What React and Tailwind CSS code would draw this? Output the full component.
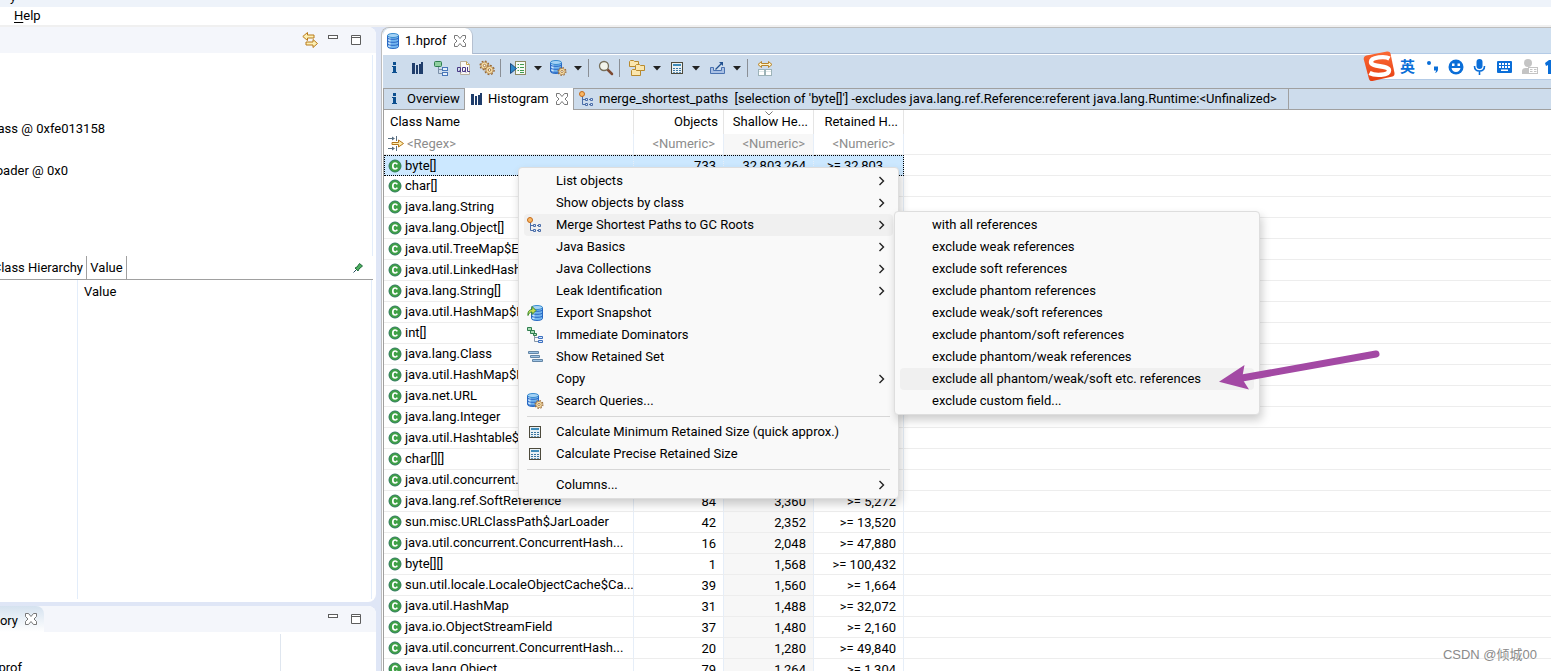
import React from "react";

const FONT = "font-['Roboto','Noto_Sans_CJK_SC',sans-serif]";

/* ---------- icons ---------- */

function Svg({ children, w = 16, h = 16, className = "" }) {
  return (
    <svg width={w} height={h} viewBox={`0 0 ${w} ${h}`} fill="none" className={`block shrink-0 ${className}`} aria-hidden="true">
      {children}
    </svg>
  );
}

const InfoIcon = () => (
  <Svg>
    <path d="M6 2h3v3H6zM5 6h4v6h1v1H5v-1h1V7H5z" fill="#0d4f8f" />
  </Svg>
);

const BarsIcon = () => (
  <Svg>
    <path d="M2 3h3v11H2zM6 5h2v9H6zM9 4h2v10H9zM11 2h2v12h-2z" fill="#1f3d6b" />
  </Svg>
);

const TreeIcon = () => (
  <Svg>
    <rect x="1.500" y="1.500" width="7" height="5" rx="1" fill="#8fcf9f" stroke="#2f7d4f" />
    <path d="M5.500 7v6.500H9M5.500 9.500H9" stroke="#7a8fa8" />
    <rect x="9.500" y="7.500" width="5" height="3" fill="#e6f0fb" stroke="#4876b8" />
    <rect x="9.500" y="12.500" width="5" height="3" fill="#e6f0fb" stroke="#4876b8" />
  </Svg>
);

const OqlIcon = () => (
  <Svg>
    <path d="M4.500 1.500h6l3 3v10h-9z" fill="#f8f7f4" stroke="#b8b0a0" />
    <path d="M10.500 1.500v3h3" stroke="#c9a24a" />
    <g stroke="#4b3a86">
      <path d="M1.500 7.500h3v4h-3zM3.500 10.500l1.500 2M6.500 7.500h3v4h-3zM8.500 10.500l1.500 2M11.500 7v4.500h2.500" />
    </g>
  </Svg>
);

const Gear = ({ cx, cy, s = 1 }) => (
  <g transform={`translate(${cx} ${cy}) scale(${s})`}>
    <circle r="4.600" stroke="#9a6a34" strokeWidth="1.400" strokeDasharray="1.800 1.810" />
    <circle r="3.700" fill="#f6dfa8" stroke="#a87840" strokeWidth=".8" />
    <circle r="1.300" fill="#fff" stroke="#9a6a34" strokeWidth=".9" />
  </g>
);

const GearsIcon = () => (
  <Svg>
    <Gear cx={5.500} cy={5.500} s={0.950} />
    <Gear cx={10.500} cy={10} s={1} />
  </Svg>
);

const QueryIcon = () => (
  <Svg w={17}>
    <rect x="5.500" y="1.500" width="10" height="13" fill="#f7fbf5" stroke="#8d8a63" />
    <path d="M10 4.500h4M10 7.500h4M10 10.500h4M10 12.500h4" stroke="#3f9a4f" />
    <path d="M7.500 4.500H9M7.500 7.500H9M7.500 10.500H9" stroke="#3f9a4f" />
    <path d="M.5 3.500l6 5-6 5z" fill="#2e88c8" stroke="#1c4a80" />
  </Svg>
);

const Cyl = ({ x = 0, y = 0, w = 11, h = 14 }) => (
  <g transform={`translate(${x} ${y})`}>
    <path d={`M.5 2.500v${h - 5}c0 1.300 ${w / 4} 2 ${w / 2 - 0.5} 2s${w / 2 - 0.5} -.7 ${w / 2 - 0.5} -2V2.500z`} fill="#74b6ee" stroke="#2b6cc4" />
    <path d={`M2.500 3v${h - 5}`} stroke="#cfe8fc" strokeWidth="2" />
    {[5.500, 8.500, 11.500].filter((n) => n < h - 1).map((n) => (
      <path key={n} d={`M.5 ${n - 1}c0 1.200 2 1.800 ${w / 2 - 0.5} 1.800s${w / 2 - 0.5} -.6 ${w / 2 - 0.5} -1.800`} stroke="#1f5cc0" strokeWidth=".9" />
    ))}
    <ellipse cx={w / 2} cy="2.500" rx={w / 2 - 0.5} ry="2" fill="#a5d3f5" stroke="#3a8cd0" />
  </g>
);

const DbIcon = () => (
  <Svg>
    <Cyl x={2} y={0} w={12} h={16} />
  </Svg>
);

const DbGearIcon = () => (
  <Svg w={17}>
    <Cyl x={0} y={0} w={12} h={14} />
    <Gear cx={12} cy={11.500} s={0.850} />
  </Svg>
);

const SearchIcon = () => (
  <Svg>
    <path d="M9.500 9.500l4.500 4.500" stroke="#7d4a33" strokeWidth="2.500" strokeLinecap="round" />
    <circle cx="6" cy="6" r="4.500" fill="#f2f4ec" stroke="#77705c" strokeWidth="1.300" />
  </Svg>
);

const FoldersIcon = () => (
  <Svg w={17}>
    {[[0.500, 0.500], [6.500, 4.500], [2.500, 9.500]].map(([x, y]) => (
      <path key={y} d={`M${x} ${y + 1}l1-1h3l1 1h4v5h-9z`} fill="#fae6ae" stroke="#b88a2e" />
    ))}
  </Svg>
);

const CalcIcon = () => (
  <Svg>
    <rect x="2.500" y="2.500" width="11" height="11" fill="#e9f1f5" stroke="#4d4a3c" />
    <path d="M4 4h8v2H4z" fill="#3f8cba" />
    <path d="M4 8h2v1H4zM7 8h2v1H7zM10 8h2v1h-2zM4 10h2v1H4zM7 10h2v1H7zM10 10h2v1h-2zM4 12h2v.8H4zM7 12h2v.8H7zM10 12h2v.8h-2z" fill="#3a75a0" />
  </Svg>
);

const ExportIcon = () => (
  <Svg w={17}>
    <path d="M1.500 7.500h3v3h8v-3h3v6h-14z" fill="#a9c0e4" stroke="#4a72b0" />
    <path d="M6.500 9.500l6-6" stroke="#1f4f8f" strokeWidth="1.200" />
    <path d="M10 2h4v4z" fill="#1f4f8f" />
  </Svg>
);

const CompareIcon = () => (
  <Svg>
    <path d="M1 4.500l3.500-3v2h7v-2l3.500 3-3.500 3v-2h-7v2z" fill="#fdf3c8" stroke="#b8842a" />
    <rect x="1.500" y="9.500" width="6" height="6" fill="#fff" stroke="#9db3b8" />
    <rect x="8.500" y="9.500" width="6" height="6" fill="#fff" stroke="#9db3b8" />
    <path d="M2 11.500h5M9 11.500h5" stroke="#dfe9ea" />
  </Svg>
);

const PathsIcon = () => (
  <Svg>
    <path d="M3.500 5v8.500H7M3.500 8.500H7M10 8.500h2M10 13.500h2" stroke="#4a6da8" />
    <circle cx="3" cy="3" r="2.500" fill="#f9b866" stroke="#c46a1a" />
    <path d="M6.500 7.500h2v2h-2zM11.500 7.500h2v2h-2zM6.500 12.500h2v2h-2zM11.500 12.500h2v2h-2z" fill="#dbe8f8" stroke="#4a6da8" />
  </Svg>
);

const ExportDbIcon = () => (
  <Svg>
    <Cyl x={4} y={0} w={12} h={16} />
    <path d="M1 10.500C.5 6.500 2.500 4.500 5 4.500v-3L9 5.500 5 9.500v-2.500c-2 0-3 1-4 3.500z" fill="#c9dc4e" stroke="#3c8a2e" />
  </Svg>
);

const DominatorsIcon = () => (
  <Svg>
    <path d="M.5.5h4v3h-4zM3.500 3.500h4v3h-4zM6.500 6.500h3v2h-3z" fill="#a9dcb4" stroke="#2f7d4f" />
    <path d="M7.500 9v5.500H11M7.500 10.500H11" stroke="#8797a8" />
    <path d="M11.500 9.500h4v2h-4zM11.500 13.500h4v2h-4z" fill="#dbe8f8" stroke="#3b6fc0" />
  </Svg>
);

const RetainedIcon = () => (
  <Svg>
    <path d="M1.500 2.500h10v2h-10zM3.500 6.500h9v2h-9zM5.500 10.500h10v2h-10z" fill="#9fc4e4" stroke="#6486a6" />
  </Svg>
);

const ClassIcon = () => (
  <Svg w={14} h={14}>
    <circle cx="7" cy="7" r="6" fill="#3fa046" stroke="#2f7a5c" />
    <path d="M9.300 5.300C8.800 4.400 8 4 7.200 4 5.600 4 4.800 5.300 4.800 7s.8 3 2.400 3c.8 0 1.600-.4 2.100-1.300" stroke="#fff" strokeWidth="1.700" />
  </Svg>
);

const FilterIcon = () => (
  <Svg>
    <path d="M0 2.500h5M0 12.500h5" stroke="#5b7083" />
    <path d="M4 .5l3 2-3 2zM4 10.500l3 2-3 2z" fill="#5b7083" />
    <path d="M8.500 0v5M8.500 10v5" stroke="#5b7083" />
    <path d="M4 6.500h6.500V4l5 3.500-5 3.500V8.500H4z" fill="#fdeeb0" stroke="#b5771c" />
  </Svg>
);

const CloseIcon = () => (
  <Svg w={12} h={12}>
    <path d="M.5.5h3L6 3.500 8.500.5h3v3L9 6l2.500 2.500v3h-3L6 8.500l-2.500 3h-3v-3L3 6 .5 3.500z" fill="#fff" stroke="#6a6a6a" strokeWidth=".9" />
  </Svg>
);

const MinIcon = () => (
  <Svg w={10} h={12}>
    <rect x=".5" y="1.500" width="9" height="3" fill="#fff" stroke="#5d5d5d" />
  </Svg>
);

const MaxIcon = () => (
  <Svg w={10} h={12}>
    <path d="M.5 1.500h9v9h-9zM.5 3.500h9" fill="#fff" stroke="#5d5d5d" />
  </Svg>
);

const SyncIcon = () => (
  <Svg>
    <path d="M.8 4.500l4.700-4v2.500H12v3H5.500v2.500z" fill="#fdf0b4" stroke="#b87a1a" />
    <path d="M15.500 11.500l-4.500-4V10H4v3h7v2.500z" fill="#fdf0b4" stroke="#b87a1a" />
  </Svg>
);

const PinIcon = () => (
  <Svg w={10} h={10}>
    <path d="M.5 9.500l3-3" stroke="#1f4a5a" />
    <path d="M2 5l2-1 2.500-3.500L9.500 3 6 6l-1 2z" fill="#4caf5e" stroke="#1f6a3a" />
  </Svg>
);

const Chevron = () => (
  <Svg w={8} h={12}>
    <path d="M1.500 2l4 4-4 4" stroke="#222" strokeWidth="1.400" />
  </Svg>
);

/* ---------- toolbar ---------- */

function Tool({ label, children }) {
  return (
    <button aria-label={label} className="flex h-6 w-[23px] items-center justify-center">
      {children}
    </button>
  );
}

function DropTool({ label, children }) {
  return (
    <button aria-label={label} className="flex h-6 w-10 items-center gap-[7px] pl-[7px]">
      {children}
      <Svg w={8} h={6}>
        <path d="M0 1h8L4 5.500z" fill="#222" />
      </Svg>
    </button>
  );
}

function Toolbar() {
  return (
    <div role="toolbar" aria-label="Heap dump tools" className="mt-px flex h-[33px] items-center bg-[#cddcec] pb-2">
      <Tool label="Overview"><InfoIcon /></Tool>
      <Tool label="Histogram"><BarsIcon /></Tool>
      <Tool label="Dominator tree"><TreeIcon /></Tool>
      <Tool label="OQL"><OqlIcon /></Tool>
      <Tool label="Thread overview"><GearsIcon /></Tool>
      <span className="mx-[2px] h-[18px] w-px bg-[#8a8f96]" />
      <DropTool label="Run report"><QueryIcon /></DropTool>
      <DropTool label="Query browser"><DbGearIcon /></DropTool>
      <span className="mx-[5px] h-[18px] w-px bg-[#8a8f96]" />
      <Tool label="Find"><SearchIcon /></Tool>
      <span className="mx-[2px] h-[18px] w-px bg-[#8a8f96]" />
      <DropTool label="Group"><FoldersIcon /></DropTool>
      <DropTool label="Calculate retained size"><CalcIcon /></DropTool>
      <DropTool label="Export"><ExportIcon /></DropTool>
      <span className="mx-[5px] h-[18px] w-px bg-[#8a8f96]" />
      <Tool label="Compare"><CompareIcon /></Tool>
    </div>
  );
}

/* ---------- histogram ---------- */

const ROWS = [
  ["byte[]", "733", "32,803,264", ">= 32,803,..."],
  ["char[]"],
  ["java.lang.String"],
  ["java.lang.Object[]"],
  ["java.util.TreeMap$E"],
  ["java.util.LinkedHash"],
  ["java.lang.String[]"],
  ["java.util.HashMap$N"],
  ["int[]"],
  ["java.lang.Class"],
  ["java.util.HashMap$N"],
  ["java.net.URL"],
  ["java.lang.Integer"],
  ["java.util.Hashtable$"],
  ["char[][]"],
  ["java.util.concurrent.C"],
  ["java.lang.ref.SoftReference", "84", "3,360", ">= 5,272"],
  ["sun.misc.URLClassPath$JarLoader", "42", "2,352", ">= 13,520"],
  ["java.util.concurrent.ConcurrentHash...", "16", "2,048", ">= 47,880"],
  ["byte[][]", "1", "1,568", ">= 100,432"],
  ["sun.util.locale.LocaleObjectCache$Ca...", "39", "1,560", ">= 1,664"],
  ["java.util.HashMap", "31", "1,488", ">= 32,072"],
  ["java.io.ObjectStreamField", "37", "1,480", ">= 2,160"],
  ["java.util.concurrent.ConcurrentHash...", "20", "1,280", ">= 49,840"],
  ["java.lang.Object", "79", "1,264", ">= 1,304"],
];

function Histogram() {
  const head = "h-6 border-r border-[#e5e5e5] p-0 font-normal";
  const cell = "h-[21px] border-b border-r border-b-[#ededed] border-r-[#e6eef8] p-0";
  const picked = "h-[21px] border-y border-r border-y-black border-r-[#e6eef8] border-dotted bg-[#cce8ff] p-0";
  const input = "block h-5 w-full bg-transparent outline-none placeholder:text-[#8c8c8c]";
  return (
    <table className="w-full table-fixed border-separate border-spacing-0 whitespace-nowrap leading-5">
      <colgroup>
        <col className="w-[250px]" />
        <col className="w-[90px]" />
        <col className="w-[90px]" />
        <col className="w-[90px]" />
        <col />
      </colgroup>
      <thead>
        <tr>
          <th className={`${head} pl-[6px] text-left`}>Class Name</th>
          <th className={`${head} pr-[5px] text-right`}>Objects</th>
          <th className={`${head} relative pr-[5px] text-right`}>
            <Svg w={8} h={5} className="absolute left-[41px] top-px">
              <path d="M.5.5L4 4 7.500.5" stroke="#777" />
            </Svg>
            Shallow He...
          </th>
          <th className={`${head} pr-[5px] text-right`}>Retained H...</th>
          <th className="p-0" aria-label="Filler" />
        </tr>
        <tr>
          <td className={cell}>
            <div className="flex items-center gap-[3px] pl-1">
              <FilterIcon />
              <input aria-label="Filter class name" placeholder="<Regex>" className={input} />
            </div>
          </td>
          {["objects", "shallow heap", "retained heap"].map((n) => (
            <td key={n} className={`${cell} pr-2 ${n === "shallow heap" ? "bg-[#f7f7f7]" : ""}`}>
              <input aria-label={`Filter ${n}`} placeholder="<Numeric>" className={`${input} text-right`} />
            </td>
          ))}
          <td className="border-b border-[#ededed] p-0" />
        </tr>
      </thead>
      <tbody>
        {ROWS.map(([name, objects, shallow, retained], i) => {
          const c = i === 0 ? picked : cell;
          return (
            <tr key={i}>
              <td className={`${c} ${i === 0 ? "border-l border-l-black" : ""}`}>
                <div className={`flex h-[19px] items-center gap-[3px] ${i === 0 ? "pl-[3px]" : "pl-1"}`}>
                  <ClassIcon />
                  <span>{name}</span>
                </div>
              </td>
              <td className={`${c} pr-[7px] text-right leading-[19px]`}>{objects}</td>
              <td className={`${c} pr-[7px] text-right leading-[19px] ${i === 0 ? "bg-[#c3def5]" : "bg-[#f7f7f7]"}`}>{shallow}</td>
              <td className={`${c} pr-[7px] text-right leading-[19px] ${i === 0 ? "border-r-black" : ""}`}>{retained}</td>
              <td className="border-b border-[#ededed] p-0" />
            </tr>
          );
        })}
      </tbody>
    </table>
  );
}

/* ---------- menus ---------- */

const MENU = [
  { t: "List objects", sub: true },
  { t: "Show objects by class", sub: true },
  { t: "Merge Shortest Paths to GC Roots", sub: true, icon: <PathsIcon />, on: true },
  { t: "Java Basics", sub: true },
  { t: "Java Collections", sub: true },
  { t: "Leak Identification", sub: true },
  { t: "Export Snapshot", icon: <ExportDbIcon /> },
  { t: "Immediate Dominators", icon: <DominatorsIcon /> },
  { t: "Show Retained Set", icon: <RetainedIcon /> },
  { t: "Copy", sub: true },
  { t: "Search Queries...", icon: <DbGearIcon /> },
  null,
  { t: "Calculate Minimum Retained Size (quick approx.)", icon: <CalcIcon /> },
  { t: "Calculate Precise Retained Size", icon: <CalcIcon /> },
  null,
  { t: "Columns...", sub: true },
];

const SUBMENU = [
  { t: "with all references" },
  { t: "exclude weak references" },
  { t: "exclude soft references" },
  { t: "exclude phantom references" },
  { t: "exclude weak/soft references" },
  { t: "exclude phantom/soft references" },
  { t: "exclude phantom/weak references" },
  { t: "exclude all phantom/weak/soft etc. references", on: true },
  { t: "exclude custom field..." },
];

function Menu({ items, label, className }) {
  return (
    <div
      role="menu"
      aria-label={label}
      className={`absolute rounded-[4px] border border-[#dedede] bg-[#f9f9f9] px-[5px] py-[2px] shadow-[2px_5px_10px_rgba(0,0,0,0.2)] ${className}`}
    >
      {items.map((m, i) =>
        m ? (
          <button
            key={m.t}
            role="menuitem"
            className={`flex h-[22px] w-full items-center whitespace-nowrap rounded-[4px] pl-[3px] pr-[7px] text-left ${m.on ? "bg-[#f0f0f0]" : ""}`}
          >
            <span className="w-[29px] shrink-0">{m.icon}</span>
            <span className="flex-1">{m.t}</span>
            {m.sub && <Chevron />}
          </button>
        ) : (
          <div key={i} role="separator" className="mx-[3px] my-1 h-px bg-[#d7d7d7]" />
        )
      )}
    </div>
  );
}

/* ---------- input method bar ---------- */

function ImeBar() {
  return (
    <div className="absolute right-0 top-[51px] flex h-[31px] items-center">
      <div className="flex h-[27px] w-[181px] items-center overflow-hidden border-y border-[#b4cbe6] bg-white pl-[30px] text-[#0a6ed8]">
        <span className="w-[27px] shrink-0 text-[15px] font-bold leading-6">英</span>
        <svg width="151" height="24" viewBox="0 0 151 24" className="shrink-0" aria-hidden="true">
          <circle cx="2" cy="8" r="2" fill="#0a6ed8" />
          <path d="M7 11.500h4v2.500c0 2-1 3.500-3 4 .8-1 1-1.800 1-2.500H7z" fill="#0a6ed8" />
          <circle cx="29" cy="12" r="7.500" fill="#0a6ed8" />
          <path d="M25 8.500h2.500v2.500H25zM30.500 8.500H33v2.500h-2.500zM24.500 13h9c-.5 2.500-2.200 4-4.500 4s-4-1.500-4.500-4z" fill="#fff" />
          <rect x="49.500" y="4" width="6" height="10" rx="3" fill="#0a6ed8" />
          <path d="M47.500 11c0 3 2 5 5 5s5-2 5-5M52.500 16v4" stroke="#0a6ed8" strokeWidth="1.600" fill="none" />
          <rect x="70" y="6" width="15" height="12" rx="1" fill="#0a6ed8" />
          <path d="M72 8h2v2h-2zM75 8h2v2h-2zM78 8h2v2h-2zM81 8h2v2h-2zM72 11h2v2h-2zM75 11h2v2h-2zM78 11h2v2h-2zM81 11h2v2h-2zM74 14.500h7v1.500h-7z" fill="#fff" />
          <circle cx="101" cy="8" r="4" fill="#c4c4c4" />
          <path d="M95 19v-3c0-2 1.500-3 3.500-3h3v6z" fill="#c4c4c4" />
          <rect x="101.500" y="12.500" width="9" height="6" fill="#fff" stroke="#c4c4c4" />
          <path d="M103 14.500h2.500M103 16.500h2.500M107 14.500h2.500M107 16.500h2.500" stroke="#c4c4c4" />
          <path d="M118 8l4-3h2c1 1.500 3 1.500 4 0h2v14h-9v-9l-2 1z" fill="#0a6ed8" />
        </svg>
      </div>
      <svg width="32" height="32" viewBox="0 0 32 32" className="absolute -left-[7px] top-0" aria-hidden="true">
        <defs>
          <linearGradient id="ime" x1="0" y1="0" x2="0" y2="1">
            <stop offset="0" stopColor="#fb6a35" />
            <stop offset="1" stopColor="#e63f12" />
          </linearGradient>
        </defs>
        <path d="M3.500 4.500L24 .5c2-.3 3 .5 3.500 2l4 19.500c.3 2-.5 3-2 3.500L9.500 30c-2 .3-3-.5-3.500-2L.8 8.500c-.5-2 .7-3.500 2.700-4z" fill="url(#ime)" />
        <path d="M26.500 7.500C22 5 8 6 8 11c0 5.500 18 3 18 8.500 0 5-14 5.500-19.500 2.500" stroke="#fff" strokeWidth="4.400" fill="none" />
      </svg>
    </div>
  );
}

/* ---------- left side ---------- */

function PanelButtons({ children }) {
  return (
    <div className="ml-auto flex items-center gap-[13px] pr-[15px]">
      {children}
      <button aria-label="Minimize"><MinIcon /></button>
      <button aria-label="Maximize"><MaxIcon /></button>
    </div>
  );
}

function LeftSide() {
  return (
    <div className="flex w-[376px] shrink-0 flex-col gap-1">
      <section className="flex h-[575px] shrink-0 flex-col overflow-hidden rounded-tr-lg rounded-br-lg bg-white">
        <header className="flex h-[26px] shrink-0 items-center bg-[#f4f6fb]">
          <PanelButtons><button aria-label="Link with editor" className="-mr-[3px]"><SyncIcon /></button></PanelButtons>
        </header>
        <div className="mr-[3px] mt-[2px] h-[201px] border-r border-[#e3edfa] pt-[63px] leading-[22px]">
          <p className="flex w-[105px] justify-end whitespace-nowrap">ass @ 0xfe013158</p>
          <p className="mt-5 flex w-[68px] justify-end whitespace-nowrap">oader @ 0x0</p>
        </div>
        <div role="tablist" className="mr-[3px] flex h-6 items-center border-b border-[#a0a0a0]">
          <button role="tab" className="flex h-full w-[87px] items-center justify-end whitespace-nowrap border-r border-[#a0a0a0] pr-[3px]">Class Hierarchy</button>
          <button role="tab" className="flex h-full w-10 items-center justify-center border-r border-[#a0a0a0]">Value</button>
          <button aria-label="Pin" className="ml-auto mr-[10px]"><PinIcon /></button>
        </div>
        <div className="mr-1 flex h-[319px] border-r border-[#e3edfa]">
          <div className="w-[78px] border-r border-[#e3edfa]" />
          <div className="pl-[6px] leading-6">Value</div>
        </div>
      </section>
      <section className="flex flex-1 flex-col overflow-hidden rounded-tr-lg bg-white">
        <header className="flex h-[26px] shrink-0 items-center bg-[#f4f6fb]">
          <div className="flex h-full w-11 items-center gap-[7px] rounded-tr-lg bg-linear-to-b from-[#d5e2ef] to-white">
            <span className="flex w-[18px] justify-end pt-[3px]">ory</span>
            <CloseIcon />
          </div>
          <PanelButtons />
        </header>
        <div className="mr-[95px] mt-[2px] flex-1 border-r border-[#dfe6ef] pt-6">
          <span className="flex w-[22px] justify-end leading-5">prof</span>
        </div>
      </section>
    </div>
  );
}

/* ---------- page ---------- */

export default function App() {
  return (
    <div className={`relative flex h-screen flex-col overflow-hidden bg-[#dfe6f6] text-[13px] text-black ${FONT}`}>
      <div className="flex h-[7px] shrink-0 items-end overflow-hidden bg-[#eef3fa] pl-[10px] leading-5">y</div>
      <nav className="flex h-5 shrink-0 items-center border-b-2 border-[#f0f0f0] bg-white pl-[14px]">
        <button className="leading-[18px]"><span className="underline underline-offset-2">H</span>elp</button>
      </nav>

      <div className="flex min-h-0 flex-1 gap-[5px]">
        <LeftSide />
        <main className="flex min-w-0 flex-1 flex-col overflow-hidden rounded-tl-lg border-l border-t border-[#bdbdbd] bg-white pl-px">
          <div className="flex h-[26px] shrink-0 border-b border-[#a9b9d0] bg-[#cfdfef]">
            <div className="flex h-[26px] w-[90px] items-center rounded-t-lg border-r border-[#b5c0d0] bg-white pl-[2px]">
              <DbIcon />
              <span className="ml-[4px] w-[49px]">1.hprof</span>
              <button aria-label="Close 1.hprof"><CloseIcon /></button>
            </div>
          </div>
          <Toolbar />
          <div role="tablist" className="flex h-[22px] shrink-0 items-center whitespace-nowrap border-y border-l border-[#a0a0a0] bg-[#cddcec]">
            <button role="tab" className="flex h-full w-[81px] items-center gap-1 rounded-tl border-r border-[#a0a0a0] pl-[3px]">
              <InfoIcon />
              Overview
            </button>
            <div role="tab" aria-selected="true" className="flex h-[22px] w-[109px] items-center border-r border-[#a0a0a0] bg-white pl-1">
              <BarsIcon />
              <span className="ml-[3px] w-[68px]">Histogram</span>
              <button aria-label="Close histogram"><CloseIcon /></button>
            </div>
            <button role="tab" className="flex h-full w-[715px] items-center gap-1 border-r border-[#a0a0a0] pl-[5px]">
              <PathsIcon />
              <span className="whitespace-pre">{"merge_shortest_paths  [selection of 'byte[]'] -excludes java.lang.ref.Reference:referent java.lang.Runtime:<Unfinalized>"}</span>
            </button>
          </div>
          <div className="min-h-0 flex-1 overflow-hidden border-l border-[#a0a0a0]">
            <Histogram />
          </div>
        </main>
      </div>

      <ImeBar />
      <Menu items={MENU} label="Context menu" className="left-[518px] top-[167px] w-[381px]" />
      <Menu items={SUBMENU} label="Merge shortest paths" className="left-[894px] top-[211px] w-[366px]" />

      <svg width="170" height="50" viewBox="0 0 170 50" fill="none" className="absolute left-[1214px] top-[344px]" aria-hidden="true">
        <path d="M28 34L162 10" stroke="#a349a4" strokeWidth="7" strokeLinecap="round" />
        <path d="M5 37.700L30.500 21 28 34.500l7 11z" fill="#a349a4" />
      </svg>

      <div className="absolute bottom-[6px] right-[14px] font-['Liberation_Sans','Noto_Sans_CJK_SC',sans-serif] text-[13px] leading-5 text-[#8a8a8a]">CSDN @倾城00</div>
    </div>
  );
}
